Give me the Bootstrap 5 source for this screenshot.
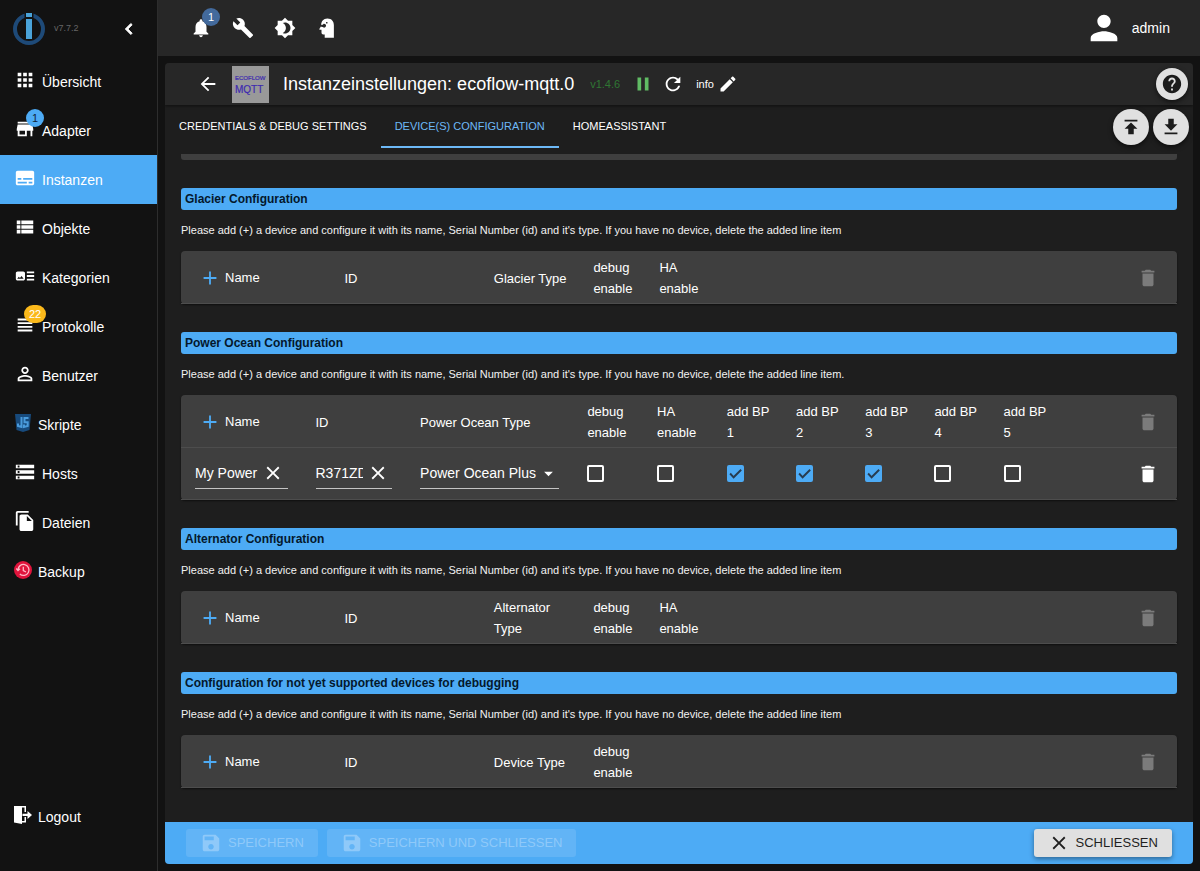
<!DOCTYPE html>
<html lang="de" data-bs-theme="dark">
<head>
<meta charset="utf-8">
<meta name="viewport" content="width=device-width, initial-scale=1">
<title>ioBroker – ecoflow-mqtt.0</title>
<link rel="stylesheet" href="https://cdn.jsdelivr.net/npm/bootstrap@5.3.0/dist/css/bootstrap.min.css">
<style>
:root { --accent: #4dabf5; --bar: #272727; --panel: #1e1e1e; --cell: #3f3f3f; --fab: #e0e0e0; }
body { font-family: "Liberation Sans", Arial, sans-serif; font-size: 14px; background: #121212; color: #fff; }
svg { display: block; fill: currentColor; flex: none; }
.ico { width: 22px; height: 22px; }
.ico-sm { width: 18px; height: 18px; }
.plain { border: 0; background: none; padding: 0; color: inherit; display: inline-flex; align-items: center; justify-content: center; }

/* sidebar */
.side { width: 158px; flex: none; border-right: 1px solid #2d2d2d; }
.side-head { height: 57px; padding: 0 17px 0 12px; }
.version { font-size: 9px; color: #666; }
.side-link { height: 49px; padding: 0 14px; gap: 6px; color: #fff; text-decoration: none; }
.side-link > .figure-box { padding-bottom: 4px; }
.side-link > .caption-text { padding-top: 2px; }
.side-link.active { background: var(--accent); }
.logout { margin: auto 0 30px; }
.pip { position: absolute; min-width: 18px; height: 18px; border-radius: 9px; padding: 0 5px; font-size: 11px; line-height: 18px; text-align: center; }
.side .pip { top: -9px; left: 12px; }
.side .pip-amber { left: 10px; }
.pip-blue { background: var(--accent); color: #10243a; }
.pip-amber { background: #fbb91b; }
.pip-bell { background: #436a9c; top: -3px; left: 22px; }

/* top bar */
.top { height: 56px; padding: 0 30px 0 22px; background: var(--bar); }
.top .plain { width: 42px; height: 34px; }
.panel-box { margin: 7px; background: var(--panel); border-radius: 4px; overflow: hidden; }
.title-row { height: 42px; padding: 0 5px 0 22px; background: var(--bar); box-shadow: 0 1px 3px #0008; }
.back { width: 42px; }
.avatar { margin: 0 14px 0 3px; }
.title-text { font-size: 18px; font-weight: 400; line-height: 24px; }
.small-text { font-size: 11px; }
.release { color: #2f7733; }
.running { color: #60bb64; }
.fab { width: 36px; height: 36px; border-radius: 50%; background: var(--fab); color: #1c1c1c; box-shadow: 0 2px 5px #0009; }
.fab-sm { width: 32px; height: 32px; }
.tabs { height: 43px; padding-right: 4px; }
.tab-btn { height: 43px; padding: 2px 14px 0; font-size: 11px; border-bottom: 2px solid transparent; }
.tab-btn.active { color: #6db9f7; border-color: #6db9f7; }

/* device sections */
.content { padding: 6px 16px 0; }
.strip { height: 6px; background: var(--cell); border-radius: 0 0 3px 3px; }
.sec { margin-top: 28px; }
.sec-title { height: 22px; line-height: 22px; padding: 0 4px; margin: 0; background: var(--accent); color: #04182c; font-size: 12px; font-weight: 700; border-radius: 3px; }
.sec-note { height: 41px; line-height: 41px; margin: 0; font-size: 11px; white-space: nowrap; color: #f2f2f2; }
.devices { width: 100%; table-layout: fixed; border-collapse: separate; border-spacing: 0; background: var(--cell); border-radius: 4px; box-shadow: 0 1px 2px #0008; }
.devices th, .devices td { padding: 6px 8px 4px 14px; border-bottom: 1px solid #4d4d4d; vertical-align: middle; line-height: 21px; font-size: 13px; font-weight: 400; }
.devices th { height: 53px; }
.devices td { height: 52px; padding: 0 14px; font-size: 14px; }
.devices th:last-child, .devices td:last-child { padding-right: 18px; }
.devices .plain { vertical-align: middle; }
.add { width: 30px; color: var(--accent) !important; }
.off { color: #7b7b7b !important; }
.w66 { width: 66px; }
.line { height: 30px; border-bottom: 1px solid #c4c4c4; }
.line input, .pick { background: none; border: 0; outline: 0; color: #fff; padding: 0; min-width: 0; font-size: 14px; }
.line .plain { width: 29px; flex: none; }
.pick { width: 100%; height: 30px; border-bottom: 1px solid #c4c4c4; appearance: none;
  background: url("data:image/svg+xml,%3Csvg xmlns='http://www.w3.org/2000/svg' viewBox='0 0 24 24'%3E%3Cpath fill='%23fff' d='M7 10l5 5 5-5z'/%3E%3C/svg%3E") no-repeat right 0 center / 21px; }
.tick.form-check-input { width: 17px; height: 17px; margin: 0; border: 2px solid #fff; border-radius: 2px; background-color: transparent; display: block; }
.tick.form-check-input:checked { background-color: var(--accent); border-color: var(--accent);
  background-size: 17px; background-image: url("data:image/svg+xml,%3Csvg xmlns='http://www.w3.org/2000/svg' viewBox='0 0 18 18'%3E%3Cpath fill='none' stroke='%23283c50' stroke-width='2' d='M3.3 9l3.7 4 8-8'/%3E%3C/svg%3E"); }

/* footer */
.foot { height: 42px; padding: 0 21px; gap: 9px; background: var(--accent); }
.foot .btn { height: 28px; padding: 0 14px; gap: 6px; font-size: 13px; line-height: 28px; border: 0; border-radius: 3px; --bs-btn-disabled-opacity: 1; }
.foot .btn:disabled { background: #62b4f6; color: #8fc9f9; }
.foot .close-btn { background: var(--fab); color: #1f1f1f; box-shadow: 0 2px 5px #0006; }
</style>
</head>
<body>
<svg class="d-none" aria-hidden="true">
  <symbol id="trash" viewBox="0 0 24 24"><path d="M6 19c0 1.1.9 2 2 2h8c1.1 0 2-.9 2-2V7H6v12zM19 4h-3.500l-1-1h-5l-1 1H5v2h14V4z"/></symbol>
  <symbol id="plus" viewBox="0 0 24 24"><path d="M19 13h-6v6h-2v-6H5v-2h6V5h2v6h6v2z"/></symbol>
  <symbol id="cross" viewBox="0 0 24 24"><path d="M19 6.410L17.590 5 12 10.590 6.410 5 5 6.410 10.590 12 5 17.590 6.410 19 12 13.410 17.590 19 19 17.590 13.410 12z"/></symbol>
  <symbol id="save" viewBox="0 0 24 24"><path d="M17 3H5c-1.110 0-2 .9-2 2v14c0 1.100.89 2 2 2h14c1.100 0 2-.9 2-2V7l-4-4zm-5 16c-1.660 0-3-1.340-3-3s1.340-3 3-3 3 1.340 3 3-1.340 3-3 3zm3-10H5V5h10v4z"/></symbol>
</svg>

<div class="d-flex vh-100">
  <nav class="side d-flex flex-column" aria-label="Navigation">
    <div class="side-head d-flex align-items-center">
      <svg width="34" height="34" viewBox="0 0 34 34"><circle cx="17" cy="17" r="14" fill="none" stroke="#1e4a78" stroke-width="4"/><path fill="#121212" d="M12.500 0h9v8h-9z"/><path fill="#4aa3d9" d="M14 1h6v4h-6zM14 7h6v20h-6z"/></svg>
      <span class="version ms-2">v7.7.2</span>
      <button class="plain ms-auto" aria-label="Menü schließen"><svg class="ico" viewBox="0 0 24 24" stroke="#fff"><path d="M15.410 7.410L14 6l-6 6 6 6 1.410-1.410L10.830 12z"/></svg></button>
    </div>
    <a href="#" class="side-link d-flex align-items-center"><span class="figure-box"><svg class="ico" viewBox="0 0 24 24"><path d="M4 8h4V4H4v4zm6 12h4v-4h-4v4zm-6 0h4v-4H4v4zm0-6h4v-4H4v4zm6 0h4v-4h-4v4zm6-10v4h4V4h-4zm-6 4h4V4h-4v4zm6 6h4v-4h-4v4zm0 6h4v-4h-4v4z"/></svg></span><span class="caption-text">Übersicht</span></a>
    <a href="#" class="side-link d-flex align-items-center"><span class="figure-box position-relative"><svg class="ico" viewBox="0 0 24 24"><path d="M20 4H4v2h16V4zm1 10v-2l-1-5H4l-1 5v2h1v6h10v-6h4v6h2v-6h1zm-9 4H6v-4h6v4z"/></svg><span class="pip pip-blue">1</span></span><span class="caption-text">Adapter</span></a>
    <a href="#" class="side-link active d-flex align-items-center" aria-current="page"><span class="figure-box"><svg class="ico" viewBox="0 0 24 24"><path d="M20 4H4c-1.100 0-2 .9-2 2v12c0 1.100.9 2 2 2h16c1.100 0 2-.9 2-2V6c0-1.100-.9-2-2-2zM4 12h4v2H4v-2zm10 6H4v-2h10v2zm6 0h-4v-2h4v2zm0-4H10v-2h10v2z"/></svg></span><span class="caption-text">Instanzen</span></a>
    <a href="#" class="side-link d-flex align-items-center"><span class="figure-box"><svg class="ico" viewBox="0 0 24 24"><path d="M3 14h4v-4H3v4zm0 5h4v-4H3v4zM3 9h4V5H3v4zm5 5h13v-4H8v4zm0 5h13v-4H8v4zM8 5v4h13V5H8z"/></svg></span><span class="caption-text">Objekte</span></a>
    <a href="#" class="side-link d-flex align-items-center"><span class="figure-box"><svg class="ico" viewBox="0 0 24 24"><path d="M22 13h-8v-2h8v2zm0-6h-8v2h8V7zm-8 10h8v-2h-8v2zm-2-8v6c0 1.100-.9 2-2 2H4c-1.100 0-2-.9-2-2V9c0-1.100.9-2 2-2h6c1.100 0 2 .9 2 2zm-1.500 6l-2.250-3-1.750 2.260-1.250-1.510L3.500 15h7z"/></svg></span><span class="caption-text">Kategorien</span></a>
    <a href="#" class="side-link d-flex align-items-center"><span class="figure-box position-relative"><svg class="ico" viewBox="0 0 24 24"><path d="M4 15h16v-2H4v2zm0 4h16v-2H4v2zm0-8h16V9H4v2zm0-6v2h16V5H4z"/></svg><span class="pip pip-amber">22</span></span><span class="caption-text">Protokolle</span></a>
    <a href="#" class="side-link d-flex align-items-center"><span class="figure-box"><svg class="ico" viewBox="0 0 24 24"><path d="M12 5.900c1.160 0 2.100.94 2.100 2.100s-.94 2.100-2.100 2.100S9.900 9.160 9.900 8s.94-2.100 2.100-2.100m0 9c2.970 0 6.100 1.460 6.100 2.100v1.100H5.900V17c0-.64 3.130-2.100 6.100-2.100M12 4C9.790 4 8 5.790 8 8s1.790 4 4 4 4-1.790 4-4-1.790-4-4-4zm0 9c-2.670 0-8 1.340-8 4v3h16v-3c0-2.660-5.330-4-8-4z"/></svg></span><span class="caption-text">Benutzer</span></a>
    <a href="#" class="side-link d-flex align-items-center"><span class="figure-box"><svg class="ico-sm" viewBox="0 0 18 18"><path fill="#174a7c" d="M1 0h16l-1.500 16L9 18l-6.500-2z"/><path fill="none" stroke="#4a9bdc" stroke-width="2" d="M7.500 3v10L4 12V9.500M14.500 4h-4V8.300h3.200v3.600L10 13V10.500"/></svg></span><span class="caption-text">Skripte</span></a>
    <a href="#" class="side-link d-flex align-items-center"><span class="figure-box"><svg class="ico" viewBox="0 0 24 24"><path d="M2 20h20v-4H2v4zm2-3h2v2H4v-2zM2 4v4h20V4H2zm4 3H4V5h2v2zm-4 7h20v-4H2v4zm2-3h2v2H4v-2z"/></svg></span><span class="caption-text">Hosts</span></a>
    <a href="#" class="side-link d-flex align-items-center"><span class="figure-box"><svg class="ico" viewBox="0 0 24 24"><path d="M16 1H4c-1.100 0-2 .9-2 2v14h2V3h12V1zm-1 4l6 6v10c0 1.100-.9 2-2 2H7.990C6.890 23 6 22.100 6 21l.01-14c0-1.100.89-2 1.990-2h7zm-1 7h5.500L14 6.500V12z"/></svg></span><span class="caption-text">Dateien</span></a>
    <a href="#" class="side-link d-flex align-items-center"><span class="figure-box"><svg class="ico-sm" viewBox="0 0 18 18"><circle cx="9" cy="9" r="9" fill="#e0143c"/><path fill="none" stroke="#ffb9c6" stroke-width="1.300" d="M4 9a5.500 5.500 0 1 1 1.800 4M2.300 7.500L4 9.500 6 7.800M9.300 5.800V9.500L12 11"/></svg></span><span class="caption-text">Backup</span></a>
    <a href="#" class="side-link logout d-flex align-items-center"><span class="figure-box"><svg class="ico-sm" viewBox="0 0 18 18"><path d="M0 0h12v6h-1.500V1.500H8V15h2.500v-4H12v5.500H8V18l-8-1.500z"/><path d="M8.500 7.800h5V5l4.500 4-4.500 4V10h-5z"/></svg></span><span class="caption-text">Logout</span></a>
  </nav>

  <div class="d-flex flex-column flex-grow-1 overflow-hidden">
    <header class="top d-flex align-items-center">
      <button class="plain position-relative" aria-label="Benachrichtigungen"><svg class="ico" viewBox="0 0 24 24"><path d="M12 22c1.100 0 2-.9 2-2h-4c0 1.100.89 2 2 2zm6-6v-5c0-3.070-1.640-5.640-4.500-6.320V4c0-.83-.67-1.500-1.500-1.500s-1.500.67-1.500 1.500v.68C7.630 5.360 6 7.920 6 11v5l-2 2v1h16v-1l-2-2z"/></svg><span class="pip pip-bell">1</span></button>
      <button class="plain" aria-label="Systemeinstellungen"><svg class="ico" viewBox="0 0 24 24"><path d="M22.700 19l-9.100-9.100c.9-2.300.4-5-1.500-6.900-2-2-5-2.400-7.400-1.300L9 6 6 9 1.600 4.700C.4 7.100.9 10.100 2.900 12.100c1.900 1.900 4.600 2.400 6.900 1.500l9.100 9.100c.4.4 1 .4 1.400 0l2.300-2.300c.5-.4.5-1.100.1-1.400z"/></svg></button>
      <button class="plain" aria-label="Farbschema"><svg class="ico" viewBox="0 0 24 24"><path d="M20 8.690V4h-4.690L12 .69 8.690 4H4v4.690L.69 12 4 15.310V20h4.690L12 23.310 15.310 20H20v-4.690L23.310 12 20 8.690zM12 18c-.89 0-1.740-.2-2.500-.55C11.560 16.500 13 14.420 13 12s-1.440-4.500-3.500-5.450C10.260 6.200 11.110 6 12 6c3.310 0 6 2.690 6 6s-2.690 6-6 6z"/></svg></button>
      <button class="plain" aria-label="Expertenmodus"><svg class="ico" viewBox="0 0 24 24"><path d="M12.500 1.500C17 1.500 19.500 4.500 19.500 9v13.500H9.500V19H8c-1.500 0-2-1-2-2v-3H4.300c-.6 0-.8-.6-.5-1.100L5.500 10C5.500 4.500 8 1.500 12.500 1.500z"/><path fill="#272727" d="M5.500 8.500h2l.8-1.200 1.700.2 1 1.500-.5 1.800-1.700.8-1.500-.8-1.800-.3zM11 5.500h1.500V7H11z"/></svg></button>
      <a href="#" class="ms-auto d-flex align-items-center text-white text-decoration-none"><svg width="40" height="40" viewBox="0 0 24 24"><path d="M12 12c2.210 0 4-1.790 4-4s-1.790-4-4-4-4 1.790-4 4 1.790 4 4 4zm0 2c-2.670 0-8 1.340-8 4v2h16v-2c0-2.660-5.330-4-8-4z"/></svg><span class="ms-2">admin</span></a>
    </header>

    <main class="panel-box d-flex flex-column flex-grow-1">
      <div class="title-row d-flex align-items-center flex-shrink-0">
        <button class="plain back" aria-label="Zurück"><svg class="ico" viewBox="0 0 24 24"><path d="M20 11H7.830l5.590-5.590L12 4l-8 8 8 8 1.410-1.410L7.830 13H20v-2z"/></svg></button>
        <svg class="avatar" width="37" height="37" viewBox="0 0 37 37" font-family="Liberation Sans"><path fill="#999" d="M0 0h37v37H0z"/><g fill="#3d2ab0" stroke="#3d2ab0" stroke-width=".2"><text x="3" y="14" font-size="6">ECOFLOW</text><text x="3" y="27" font-size="10">MQTT</text></g></svg>
        <h1 class="title-text mb-0">Instanzeinstellungen: ecoflow-mqtt.0</h1>
        <span class="small-text release ms-3">v1.4.6</span>
        <button class="plain running ms-2 ps-1" aria-label="Pause"><svg class="ico" viewBox="0 0 24 24"><path d="M6 19h4V5H6v14zm8-14v14h4V5h-4z"/></svg></button>
        <button class="plain ms-2" aria-label="Neu starten"><svg class="ico" viewBox="0 0 24 24"><path d="M17.650 6.350C16.200 4.900 14.210 4 12 4c-4.420 0-7.990 3.580-7.990 8s3.570 8 7.990 8c3.730 0 6.840-2.550 7.730-6h-2.080c-.82 2.330-3.040 4-5.650 4-3.310 0-6-2.690-6-6s2.690-6 6-6c1.660 0 3.140.69 4.220 1.780L13 11h7V4l-2.350 2.350z"/></svg></button>
        <button class="plain ms-2 ps-1 gap-1"><span class="small-text">info</span><svg width="20" height="20" viewBox="0 0 24 24"><path d="M3 17.250V21h3.750L17.810 9.940l-3.750-3.750L3 17.250zM20.710 7.040c.39-.39.39-1.020 0-1.410l-2.340-2.340c-.39-.39-1.020-.39-1.410 0l-1.830 1.830 3.750 3.750 1.830-1.830z"/></svg></button>
        <button class="plain fab fab-sm ms-auto" aria-label="Hilfe"><svg class="ico" viewBox="0 0 24 24"><path d="M12 2C6.480 2 2 6.480 2 12s4.480 10 10 10 10-4.480 10-10S17.520 2 12 2zm1 17h-2v-2h2v2zm2.070-7.750l-.9.920C13.450 12.900 13 13.500 13 15h-2v-.5c0-1.100.45-2.100 1.170-2.830l1.240-1.260c.37-.36.59-.86.59-1.410 0-1.100-.9-2-2-2s-2 .9-2 2H8c0-2.210 1.790-4 4-4s4 1.790 4 4c0 .88-.36 1.680-.93 2.250z"/></svg></button>
      </div>
      <div class="tabs d-flex align-items-center flex-shrink-0" role="tablist">
        <button class="plain tab-btn" role="tab">CREDENTIALS &amp; DEBUG SETTINGS</button>
        <button class="plain tab-btn active" role="tab" aria-selected="true">DEVICE(S) CONFIGURATION</button>
        <button class="plain tab-btn" role="tab">HOMEASSISTANT</button>
        <button class="plain fab ms-auto" aria-label="Importieren"><svg class="ico" viewBox="0 0 24 24"><path d="M5 4v2h14V4H5zm0 10h4v6h6v-6h4l-7-7-7 7z"/></svg></button>
        <button class="plain fab ms-1" aria-label="Exportieren"><svg class="ico" viewBox="0 0 24 24"><path d="M19 9h-4V3H9v6H5l7 7 7-7zM5 18v2h14v-2H5z"/></svg></button>
      </div>

      <div class="content flex-grow-1 overflow-auto">
        <div class="strip"></div>

        <section class="sec">
          <h2 class="sec-title">Glacier Configuration</h2>
          <p class="sec-note">Please add (+) a device and configure it with its name, Serial Number (id) and it's type. If you have no device, delete the added line item</p>
          <table class="devices">
            <colgroup><col style="width:15%"><col style="width:15%"><col style="width:10%"><col class="w66"><col class="w66"><col></colgroup>
            <tr><th><button class="plain add" aria-label="Hinzufügen"><svg class="ico" viewBox="0 0 24 24"><use href="#plus"/></svg></button>Name</th><th>ID</th><th>Glacier Type</th><th>debug enable</th><th>HA enable</th><th class="text-end"><button class="plain off" disabled aria-label="Alle löschen"><svg class="ico" viewBox="0 0 24 24"><use href="#trash"/></svg></button></th></tr>
          </table>
        </section>

        <section class="sec">
          <h2 class="sec-title">Power Ocean Configuration</h2>
          <p class="sec-note">Please add (+) a device and configure it with its name, Serial Number (id) and it's type. If you have no device, delete the added line item.</p>
          <table class="devices">
            <colgroup><col style="width:12.1%"><col style="width:10.5%"><col style="width:16.8%"><col style="width:7%"><col style="width:7%"><col style="width:6.950%"><col style="width:6.950%"><col style="width:6.950%"><col style="width:6.950%"><col style="width:6.950%"><col></colgroup>
            <tr><th><button class="plain add" aria-label="Hinzufügen"><svg class="ico" viewBox="0 0 24 24"><use href="#plus"/></svg></button>Name</th><th>ID</th><th>Power Ocean Type</th><th>debug enable</th><th>HA enable</th><th>add BP<br>1</th><th>add BP<br>2</th><th>add BP<br>3</th><th>add BP<br>4</th><th>add BP<br>5</th><th class="text-end"><button class="plain off" disabled aria-label="Alle löschen"><svg class="ico" viewBox="0 0 24 24"><use href="#trash"/></svg></button></th></tr>
            <tr>
              <td><div class="line d-flex"><input class="flex-grow-1 w-100" type="text" value="My Power" aria-label="Name"><button class="plain" aria-label="Name leeren"><svg class="ico" viewBox="0 0 24 24"><use href="#cross"/></svg></button></div></td>
              <td><div class="line d-flex"><input class="flex-grow-1 w-100" type="text" value="R371ZD" aria-label="ID"><button class="plain" aria-label="ID leeren"><svg class="ico" viewBox="0 0 24 24"><use href="#cross"/></svg></button></div></td>
              <td><select class="pick" aria-label="Power Ocean Type"><option>Power Ocean Plus</option></select></td>
              <td><input type="checkbox" class="form-check-input tick" aria-label="debug enable"></td>
              <td><input type="checkbox" class="form-check-input tick" aria-label="HA enable"></td>
              <td><input type="checkbox" class="form-check-input tick" aria-label="add BP 1" checked></td>
              <td><input type="checkbox" class="form-check-input tick" aria-label="add BP 2" checked></td>
              <td><input type="checkbox" class="form-check-input tick" aria-label="add BP 3" checked></td>
              <td><input type="checkbox" class="form-check-input tick" aria-label="add BP 4"></td>
              <td><input type="checkbox" class="form-check-input tick" aria-label="add BP 5"></td>
              <td class="text-end"><button class="plain" aria-label="Löschen"><svg class="ico" viewBox="0 0 24 24"><use href="#trash"/></svg></button></td>
            </tr>
          </table>
        </section>

        <section class="sec">
          <h2 class="sec-title">Alternator Configuration</h2>
          <p class="sec-note">Please add (+) a device and configure it with its name, Serial Number (id) and it's type. If you have no device, delete the added line item</p>
          <table class="devices">
            <colgroup><col style="width:15%"><col style="width:15%"><col style="width:10%"><col class="w66"><col class="w66"><col></colgroup>
            <tr><th><button class="plain add" aria-label="Hinzufügen"><svg class="ico" viewBox="0 0 24 24"><use href="#plus"/></svg></button>Name</th><th>ID</th><th>Alternator Type</th><th>debug enable</th><th>HA enable</th><th class="text-end"><button class="plain off" disabled aria-label="Alle löschen"><svg class="ico" viewBox="0 0 24 24"><use href="#trash"/></svg></button></th></tr>
          </table>
        </section>

        <section class="sec">
          <h2 class="sec-title">Configuration for not yet supported devices for debugging</h2>
          <p class="sec-note">Please add (+) a device and configure it with its name, Serial Number (id) and it's type. If you have no device, delete the added line item</p>
          <table class="devices">
            <colgroup><col style="width:15%"><col style="width:15%"><col style="width:10%"><col class="w66"><col></colgroup>
            <tr><th><button class="plain add" aria-label="Hinzufügen"><svg class="ico" viewBox="0 0 24 24"><use href="#plus"/></svg></button>Name</th><th>ID</th><th>Device Type</th><th>debug enable</th><th class="text-end"><button class="plain off" disabled aria-label="Alle löschen"><svg class="ico" viewBox="0 0 24 24"><use href="#trash"/></svg></button></th></tr>
          </table>
        </section>
      </div>

      <footer class="foot d-flex align-items-center flex-shrink-0">
        <button class="btn d-flex align-items-center" disabled><svg class="ico" viewBox="0 0 24 24"><use href="#save"/></svg>SPEICHERN</button>
        <button class="btn d-flex align-items-center" disabled><svg class="ico" viewBox="0 0 24 24"><use href="#save"/></svg>SPEICHERN UND SCHLIESSEN</button>
        <button class="btn close-btn d-flex align-items-center ms-auto"><svg class="ico" viewBox="0 0 24 24"><use href="#cross"/></svg>SCHLIESSEN</button>
      </footer>
    </main>
  </div>
</div>
<script src="https://cdn.jsdelivr.net/npm/bootstrap@5.3.0/dist/js/bootstrap.bundle.min.js"></script>
</body>
</html>
